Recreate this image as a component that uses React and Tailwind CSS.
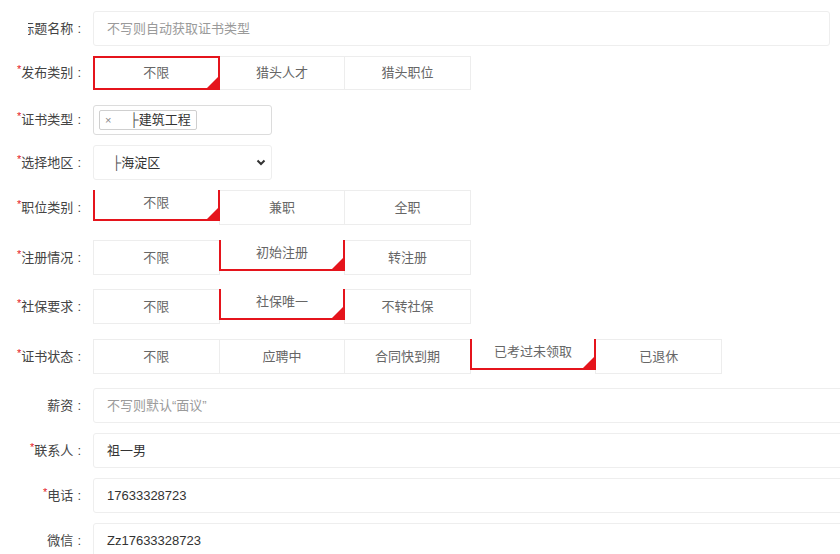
const RED = 'border-[#e5141c]'

function Label({ required, children, clip }) {
  return (
    <div className="flex w-[93px] shrink-0 justify-end pr-[12px] text-[13px] text-[#444]">
      <div className={clip ? 'flex w-[53px] justify-end overflow-hidden whitespace-nowrap' : 'flex whitespace-nowrap'}>
        {required && <span className="mt-[-2px] text-[11px] text-[#e5141c]">*</span>}
        <span>{children}</span>
        <span className="ml-[4px]">:</span>
      </div>
    </div>
  )
}

function Corner() {
  return (
    <span className="absolute bottom-0 right-0 h-0 w-0 border-b-[11px] border-l-[11px] border-b-[#e5141c] border-l-transparent" />
  )
}

function Choices({ options, selected, lifted, height = 'h-[35px]' }) {
  return (
    <div className={`flex ${height}`}>
      {options.map((opt, i) => {
        const active = i === selected
        let cls = `relative flex w-[126.6px] shrink-0 items-center justify-center text-[13px] text-[#666] ${i > 0 ? '-ml-px' : ''}`
        if (!active) cls += ` h-full border border-[#ededed]`
        else if (lifted) cls += ` z-10 h-[31px] self-start border-2 border-t-0 ${RED} pb-[3px]`
        else cls += ` z-10 h-full border-2 ${RED}`
        return (
          <div key={opt} className={cls}>
            {opt}
            {active && <Corner />}
          </div>
        )
      })}
    </div>
  )
}

function TextInput({ value, placeholder, wide = 'w-[760px]' }) {
  return (
    <div className={`flex h-[35px] ${wide} shrink-0 items-center rounded-[3px] border border-[#eeeeee] px-[13px] text-[13px]`}>
      {value ? <span className="text-[#333]">{value}</span> : <span className="text-[#9a9a9a]">{placeholder}</span>}
    </div>
  )
}

function Row({ label, required, clip, mt, children }) {
  return (
    <div className={`flex items-center ${mt}`}>
      <Label required={required} clip={clip}>{label}</Label>
      {children}
    </div>
  )
}

export default function App() {
  const yesNo = ['不限', '猎头人才', '猎头职位']

  return (
    <div
      className="h-[554px] w-[840px] overflow-hidden bg-white pt-[11px]"
      style={{ fontFamily: '"Liberation Sans", "Noto Sans CJK SC", sans-serif' }}
    >
      <Row label="标题名称" clip mt="mt-0">
        <TextInput placeholder="不写则自动获取证书类型" wide="w-[737px]" />
      </Row>

      <Row label="发布类别" required mt="mt-[10px]">
        <Choices options={yesNo} selected={0} height="h-[34px]" />
      </Row>

      <Row label="证书类型" required mt="mt-[15px]">
        <div className="flex h-[30px] w-[179px] items-center rounded-[3px] border border-[#dcdcdc] px-[5px]">
          <span className="inline-flex h-[20px] items-center rounded-[2px] border border-[#cfcfcf] px-[5px] text-[13px] text-[#333]">
            <span className="text-[11px] text-[#888]">×</span>
            <span className="ml-[18px] text-[#555]">├</span>
            <span>建筑工程</span>
          </span>
        </div>
      </Row>

      <Row label="选择地区" required mt="mt-[10px]">
        <div className="flex h-[35px] w-[179px] items-center justify-between rounded-[3px] border border-[#eeeeee] pl-[18px] pr-[5px] text-[13px] text-[#333]">
          <span>
            <span className="text-[#555]">├</span>海淀区
          </span>
          <svg width="10" height="7" viewBox="0 0 10 7">
            <path d="M1.5 1.5l3.5 3.5 3.5-3.5" fill="none" stroke="#333" strokeWidth="2" />
          </svg>
        </div>
      </Row>

      <Row label="职位类别" required mt="mt-[10px]">
        <Choices options={['不限', '兼职', '全职']} selected={0} lifted />
      </Row>

      <Row label="注册情况" required mt="mt-[15px]">
        <Choices options={['不限', '初始注册', '转注册']} selected={1} lifted />
      </Row>

      <Row label="社保要求" required mt="mt-[14px]">
        <Choices options={['不限', '社保唯一', '不转社保']} selected={1} lifted />
      </Row>

      <Row label="证书状态" required mt="mt-[15px]">
        <Choices options={['不限', '应聘中', '合同快到期', '已考过未领取', '已退休']} selected={3} lifted />
      </Row>

      <Row label="薪资" mt="mt-[14px]">
        <TextInput placeholder="不写则默认“面议”" />
      </Row>

      <Row label="联系人" required mt="mt-[10px]">
        <TextInput value="祖一男" />
      </Row>

      <Row label="电话" required mt="mt-[10px]">
        <TextInput value="17633328723" />
      </Row>

      <Row label="微信" mt="mt-[10px]">
        <TextInput value="Zz17633328723" />
      </Row>
    </div>
  )
}
